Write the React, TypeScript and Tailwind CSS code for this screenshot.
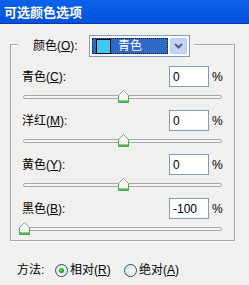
const channels = [
  { name: "青色", key: "C", value: 0 },
  { name: "洋红", key: "M", value: 0 },
  { name: "黄色", key: "Y", value: 0 },
  { name: "黑色", key: "B", value: -100 },
];

function Thumb() {
  return (
    <svg width="11" height="13" viewBox="0 0 11 13">
      <path d="M0.5 5.5 L5.5 0.5 L10.5 5.5 V12.5 H0.5 Z" fill="#f7f7f4" stroke="#8c9aa8" />
      <path d="M1 11 H10 M1 12 H10" stroke="#21a121" />
      <path d="M0.5 5.5 V12.5 M10.5 5.5 V12.5" stroke="#3fb33f" />
    </svg>
  );
}

function Slider({ value, last }: { value: number; last?: boolean }) {
  const pct = ((value + 100) / 200) * 100;
  return (
    <div className={last ? "h-[21px] pt-[8px]" : "h-[23px] pt-[8px]"}>
      <div className="relative mx-[12px] h-[4px] rounded-[2px] border border-[#a8a8a8] bg-[#f4f4f2]">
        <div className="absolute top-[-6px]" style={{ left: `calc(${pct}% - 5px)` }}>
          <Thumb />
        </div>
      </div>
    </div>
  );
}

function Radio({ checked }: { checked?: boolean }) {
  return (
    <svg width="13" height="13" viewBox="0 0 13 13">
      <defs>
        <linearGradient id="rg" x1="0" y1="0" x2="1" y2="1">
          <stop offset="0" stopColor="#dcdcd7" />
          <stop offset="1" stopColor="#ffffff" />
        </linearGradient>
      </defs>
      <circle cx="6.5" cy="6.5" r="6" fill="url(#rg)" stroke="#1c5180" />
      {checked && <circle cx="6.5" cy="6.5" r="2.6" fill="#2fa82f" />}
      {checked && <circle cx="6" cy="6" r="1" fill="#7fd97f" />}
    </svg>
  );
}

export default function App() {
  return (
    <div className="w-[249px] h-[285px] bg-[#f0f0ee] text-[12px] text-black font-['Liberation_Sans','Noto_Sans_CJK_SC',sans-serif] overflow-hidden">
      <div className="h-[24px] flex items-center pl-[4px] bg-gradient-to-b from-[#0b63ec] to-[#0350dc] border-b border-[#0039a6] text-white font-bold text-[13px] font-['Noto_Sans_CJK_SC',sans-serif]">
        可选颜色选项
      </div>

      <div className="mt-[20px] ml-[10px] w-[225px] border border-[#a6a6a2] shadow-[inset_1px_1px_0_#ffffff,1px_1px_0_#ffffff] flex flex-col">
        <div className="-mt-[10px] ml-[7px] self-start flex items-center bg-[#f0f0ee] pl-[15px] pr-[4px]">
          <span className="w-[56px]">
            颜色(<u>O</u>):
          </span>
          <div className="w-[101px] h-[22px] border border-[#7f9db9] bg-white flex p-[2px] gap-[2px]">
            <div className="flex-1 flex items-center bg-[#316ac5] outline outline-1 outline-dotted outline-[#1a1a1a] -outline-offset-1">
              <div className="ml-[4px] w-[15px] h-[15px] bg-[#3ec7f7] border border-black" />
              <span className="ml-[7px] text-white">青色</span>
            </div>
            <div className="w-[17px] flex items-center justify-center rounded-[2px] bg-[#c3d4fc] border border-[#b6c9f7]">
              <svg width="9" height="6" viewBox="0 0 9 6">
                <path d="M1 1 L4.5 4.5 L8 1" fill="none" stroke="#4d6185" strokeWidth="2" />
              </svg>
            </div>
          </div>
        </div>

        <div className="mt-[9px]">
          {channels.map((c, i) => (
            <div key={c.key}>
              <div className="flex h-[21px] items-center">
                <span className="ml-[11px]">
                  {c.name}(<u>{c.key}</u>):
                </span>
                <div className="ml-auto w-[40px] h-[21px] border border-[#7f9db9] bg-white flex items-center pl-[3px]">
                  {c.value}
                </div>
                <span className="ml-[3px] w-[11px] mr-[11px]">%</span>
              </div>
              <Slider value={c.value} last={i === channels.length - 1} />
            </div>
          ))}
        </div>
      </div>

      <div className="mt-[21px] flex items-center h-[16px]">
        <span className="ml-[17px] w-[38px]">方法:</span>
        <div className="w-[69px] flex items-center">
          <Radio checked />
          <span className="ml-[2px]">
            相对(<u>R</u>)
          </span>
        </div>
        <div className="flex items-center">
          <Radio />
          <span className="ml-[2px]">
            绝对(<u>A</u>)
          </span>
        </div>
      </div>
    </div>
  );
}
